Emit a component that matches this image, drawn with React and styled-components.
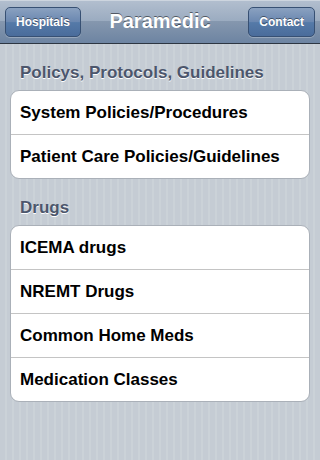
import React from "react";
import styled, { createGlobalStyle } from "styled-components";

const Global = createGlobalStyle`
  html, body { margin: 0; padding: 0; }
  body {
    width: 320px;
    height: 460px;
    overflow: hidden;
    font-family: "Liberation Sans", Arial, Helvetica, sans-serif;
  }
`;

const Screen = styled.div`
  width: 320px;
  height: 460px;
  display: flex;
  flex-direction: column;
  background-color: #c5ccd4;
  background-image: repeating-linear-gradient(
    90deg,
    #c5ccd4 0px,
    #c5ccd4 5px,
    #cbd2d8 5px,
    #cbd2d8 7px
  );
`;

const NavBar = styled.div`
  height: 43px;
  flex: none;
  display: grid;
  grid-template-columns: 1fr auto 1fr;
  align-items: center;
  padding: 0 5px;
  background: linear-gradient(
    to bottom,
    #b3bfcf 0%,
    #9aabc0 50%,
    #8597ae 50%,
    #6d84a2 100%
  );
  border-bottom: 1px solid #2d3642;
  box-shadow: inset 0 1px 0 #cdd5df;
`;

const NavButton = styled.button`
  justify-self: ${(p) => (p.$right ? "end" : "start")};
  height: 30px;
  padding: 0 10px;
  margin-top: 1px;
  border-radius: 5px;
  border: 1px solid #375073;
  background: linear-gradient(
    to bottom,
    #8aa1c0 0%,
    #6a87b0 50%,
    #557aa8 52%,
    #4a6c9b 100%
  );
  box-shadow: 0 1px 0 rgba(255, 255, 255, 0.25);
  color: #fff;
  font-family: "Liberation Sans", Arial, sans-serif;
  font-weight: bold;
  font-size: 12px;
  text-shadow: 0 -1px 0 rgba(0, 0, 0, 0.45);
`;

const Title = styled.div`
  color: #fff;
  font-size: 20px;
  font-weight: bold;
  text-shadow: 0 -1px 0 rgba(0, 0, 0, 0.5);
  margin-top: -1px;
`;

const Content = styled.div`
  display: flex;
  flex-direction: column;
  padding: 0 10px;
`;

const SectionHeader = styled.div`
  height: 46px;
  display: flex;
  align-items: flex-end;
  padding: 0 10px 7px;
  box-sizing: border-box;
  color: #4c566c;
  font-size: 17px;
  font-weight: bold;
  text-shadow: 0 1px 0 #fff;
`;

const Group = styled.div`
  background: #fff;
  border: 1px solid #aab0b8;
  border-radius: 9px;
  overflow: hidden;
`;

const Row = styled.div`
  height: 44px;
  box-sizing: border-box;
  display: flex;
  align-items: center;
  padding: 1px 9px 0;
  color: #000;
  font-size: 17px;
  font-weight: bold;
  & + & {
    border-top: 1px solid #c4c4c4;
  }
  &:first-child {
    height: 43px;
  }
`;

const sections = [
  {
    title: "Policys, Protocols, Guidelines",
    rows: ["System Policies/Procedures", "Patient Care Policies/Guidelines"],
  },
  {
    title: "Drugs",
    rows: ["ICEMA drugs", "NREMT Drugs", "Common Home Meds", "Medication Classes"],
  },
];

export default function App() {
  return (
    <>
      <Global />
      <Screen>
        <NavBar>
          <NavButton>Hospitals</NavButton>
          <Title>Paramedic</Title>
          <NavButton $right>Contact</NavButton>
        </NavBar>
        <Content>
          {sections.map((s) => (
            <React.Fragment key={s.title}>
              <SectionHeader>{s.title}</SectionHeader>
              <Group>
                {s.rows.map((r) => (
                  <Row key={r}>{r}</Row>
                ))}
              </Group>
            </React.Fragment>
          ))}
        </Content>
      </Screen>
    </>
  );
}
